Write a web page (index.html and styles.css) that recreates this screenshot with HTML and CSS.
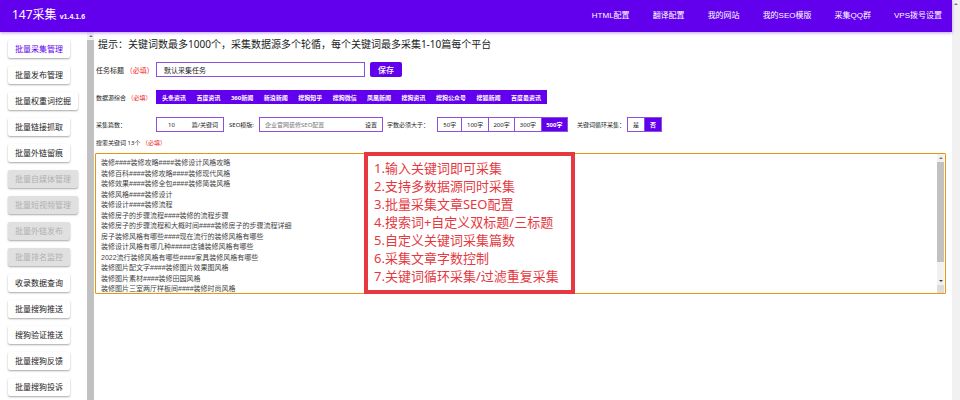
FILE: index.html
```html
<!DOCTYPE html>
<html lang="zh-CN">
<head>
<meta charset="utf-8">
<title>147采集</title>
<link rel="stylesheet" href="styles.css">
</head>
<body>
<div class="app">
  <header class="topbar">
    <h1 class="brand">147采集 <span class="version">v1.4.1.6</span></h1>
    <nav class="nav">
      <a href="#">HTML配置</a>
      <a href="#">翻译配置</a>
      <a href="#">我的网站</a>
      <a href="#">我的SEO模版</a>
      <a href="#">采集QQ群</a>
      <a href="#">VPS拨号设置</a>
    </nav>
  </header>
  <div class="body">
    <aside class="sidebar">
      <button class="side-btn active">批量采集管理</button>
      <button class="side-btn">批量发布管理</button>
      <button class="side-btn">批量权重词挖掘</button>
      <button class="side-btn">批量链接抓取</button>
      <button class="side-btn">批量外链留痕</button>
      <button class="side-btn" disabled>批量自媒体管理</button>
      <button class="side-btn" disabled>批量短视频管理</button>
      <button class="side-btn" disabled>批量外链发布</button>
      <button class="side-btn" disabled>批量排名监控</button>
      <button class="side-btn">收录数据查询</button>
      <button class="side-btn">批量搜狗推送</button>
      <button class="side-btn">搜狗验证推送</button>
      <button class="side-btn">批量搜狗反馈</button>
      <button class="side-btn">批量搜狗投诉</button>
    </aside>
    <div class="scroll side-scroll"><i class="arrow up"></i><i class="thumb"></i></div>
    <main class="content">
      <p class="hint">提示：关键词数最多1000个，采集数据源多个轮循，每个关键词最多采集1-10篇每个平台</p>
      <div class="row task-row">
        <label class="label large" for="task">任务标题 <span class="req">（必填）</span></label>
        <input class="field task" id="task" type="text" value="默认采集任务">
        <button class="save">保存</button>
      </div>
      <div class="row source-row">
        <span class="label">数据源综合 <span class="req">（必填）</span></span>
        <div class="sources">
          <button>头条资讯</button>
          <button>百度资讯</button>
          <button>360新闻</button>
          <button>新浪新闻</button>
          <button>搜狗知乎</button>
          <button>搜狗微信</button>
          <button>凤凰新闻</button>
          <button>搜狗资讯</button>
          <button>搜狗公众号</button>
          <button>搜狐新闻</button>
          <button>百度最资讯</button>
        </div>
      </div>
      <div class="row option-row">
        <label class="label" for="count">采集篇数：</label>
        <div class="field combo count">
          <input id="count" type="text" value="10">
          <span>篇/关键词</span>
        </div>
        <label class="seo-label" for="seo">SEO模版:</label>
        <div class="field combo seo">
          <input id="seo" type="text" placeholder="企业官网装修SEO配置">
          <button>设置</button>
        </div>
        <span class="words-label">字数必须大于：</span>
        <div class="group words">
          <button>50字</button><button>100字</button><button>200字</button><button>300字</button><button class="on">500字</button>
        </div>
        <span class="loop-label">关键词循环采集：</span>
        <div class="group loop">
          <button>是</button><button class="on">否</button>
        </div>
      </div>
      <label class="keywords-label" for="keywords">搜索关键词 13个 <span class="req">（必填）</span></label>
      <div class="editor">
        <textarea id="keywords" rows="13">装修####装修攻略####装修设计风格攻略
装修百科####装修攻略####装修现代风格
装修效果####装修全包####装修简装风格
装修风格####装修设计
装修设计####装修流程
装修房子的步骤流程####装修的流程步骤
装修房子的步骤流程和大概时间####装修房子的步骤流程详细
房子装修风格有哪些####现在流行的装修风格有哪些
装修设计风格有哪几种#####店铺装修风格有哪些
2022流行装修风格有哪些####家具装修风格有哪些
装修图片配文字####装修图片效果图风格
装修图片素材####装修田园风格
装修图片三室两厅样板间####装修时尚风格</textarea>
        <div class="scroll editor-scroll"><i class="arrow up"></i><i class="thumb"></i><i class="arrow down"></i><i class="grip"></i></div>
        <ol class="notes">
          <li>1.输入关键词即可采集</li>
          <li>2.支持多数据源同时采集</li>
          <li>3.批量采集文章SEO配置</li>
          <li>4.搜索词+自定义双标题/三标题</li>
          <li>5.自定义关键词采集篇数</li>
          <li>6.采集文章字数控制</li>
          <li>7.关键词循环采集/过滤重复采集</li>
        </ol>
      </div>
    </main>
  </div>
</div>
<div class="scroll page-scroll"><i class="arrow up"></i></div>
</body>
</html>
```
FILE: styles.css
```css
* { box-sizing: border-box; }

body {
  margin: 0;
  display: flex;
  height: 100vh;
  overflow: hidden;
  background: #fff;
  color: #222;
  font-family: "Noto Sans", "Noto Sans CJK SC", sans-serif;
  font-size: 6px;
}

button, input, textarea {
  font: inherit;
  color: inherit;
  margin: 0;
  padding: 0;
  border: 0;
  outline: 0;
  background: none;
  white-space: nowrap;
}

.app { flex: 1; min-width: 0; display: flex; flex-direction: column; }

.topbar {
  display: flex;
  align-items: center;
  justify-content: space-between;
  flex: none;
  height: 32px;
  padding: 0 10px 0 12px;
  background: #6200ee;
  color: #fff;
  box-shadow: 0 1px 3px rgba(98, 0, 238, 0.4);
  z-index: 1;
}
.brand { margin: 0; font-size: 12px; font-weight: 400; line-height: 16px; }
.version { font-family: "Liberation Sans", sans-serif; font-size: 7px; font-weight: 700; }
.nav { display: flex; gap: 23px; }
.nav a { color: #fff; text-decoration: none; font-family: "Liberation Sans", "Noto Sans CJK SC", sans-serif; font-size: 8px; line-height: 12px; }

.body { flex: 1; min-height: 0; display: flex; }

.sidebar {
  width: 87px;
  flex: none;
  display: flex;
  flex-direction: column;
  align-items: flex-start;
  gap: 8px;
  padding: 8px 0 0 8px;
  overflow: hidden;
}
.side-btn {
  flex: none;
  height: 18px;
  padding: 0 7px;
  border-radius: 2px;
  background: #fff;
  font-size: 8px;
  line-height: 18px;
  box-shadow: 0 1px 2px rgba(0, 0, 0, 0.35);
}
.side-btn.active { color: #6200ee; }
.side-btn:disabled { background: #e0e0e0; color: #b0b0b0; }

.scroll { flex: none; display: flex; flex-direction: column; align-items: center; background: #f1f1f1; }
.side-scroll { width: 7px; }
.page-scroll { width: 8px; }
.arrow { flex: none; height: 8px; display: flex; align-items: center; justify-content: center; }
.arrow::before { content: ""; border: 2px solid transparent; }
.up::before { border-top: 0; border-bottom-color: #777; }
.down::before { border-bottom: 0; border-top-color: #444; }
.thumb { flex: 1; align-self: stretch; background: #c1c1c1; }

.content { flex: 1; min-width: 0; padding: 5px 6px 0 1px; }
.hint { margin: 0 0 10px 3px; font-size: 10px; line-height: 15px; }

.row { display: flex; align-items: center; white-space: nowrap; padding-left: 1px; }
.label { width: 60px; flex: none; }
.label.large { font-size: 7px; }
.req { color: #f02020; }

.field { height: 15px; border: 1px solid #8c50dc; }
.task-row { height: 15px; margin-bottom: 13px; }
.task { width: 209px; padding: 0 7px; font-size: 7px; }
.save {
  width: 32px;
  height: 15px;
  margin-left: 5px;
  border-radius: 2px;
  background: #6200ee;
  color: #fff;
  font-size: 8px;
  font-weight: 500;
  line-height: 15px;
}

.source-row { height: 14px; margin-bottom: 13px; }
.sources {
  display: flex;
  justify-content: space-between;
  width: 391px;
  height: 14px;
  padding: 0 6px;
  background: #6200ee;
  color: #fff;
  font-weight: 700;
}

.option-row { height: 15px; margin-bottom: 6px; }
.combo { display: flex; align-items: center; padding: 0 5px; }
.combo input { flex: 1; min-width: 0; }
.count { width: 68px; }
.count input { padding-left: 6px; }
.seo-label { width: 35px; padding-left: 5px; }
.seo { width: 124px; }
.seo input::placeholder { color: #777; opacity: 1; }
.words-label { width: 54px; padding-left: 4px; }
.group { display: flex; height: 15px; border: 1px solid #8c50dc; }
.group button + button { border-left: 1px solid #8c50dc; }
.group .on { background: #6200ee; color: #fff; font-weight: 700; }
.words { width: 131px; }
.words button { flex: 1 1 27px; }
.words button:first-child { flex-basis: 24px; }
.loop-label { width: 59px; padding-left: 9px; }
.loop { width: 35px; }
.loop button { flex: 1; }

.keywords-label { display: block; line-height: 10px; margin-bottom: 5px; padding-left: 1px; }

.editor { position: relative; display: flex; height: 141px; border: 1px solid #e8960c; border-radius: 1px; }
.editor textarea {
  flex: 1;
  min-width: 0;
  padding: 4px 5px 0;
  font-family: "Liberation Sans", "Noto Sans CJK SC", sans-serif;
  font-size: 7px;
  line-height: 1.5;
  color: #444;
  resize: none;
  overflow: hidden;
}
.editor-scroll { width: 7px; margin-right: 1px; }
.editor-scroll .thumb { flex: 0 0 72%; }
.editor-scroll .down { margin-top: auto; }
.grip { height: 8px; align-self: stretch; background: #dcdcdc; }

.notes {
  position: absolute;
  top: -2px;
  left: 268px;
  margin: 0;
  padding: 3px 4px 5px 6px;
  list-style: none;
  border: 4px solid #e6393f;
  background: #fff;
  color: #e6393f;
  font-size: 13px;
  line-height: 18px;
  width: 211px;
  white-space: nowrap;
}
```
